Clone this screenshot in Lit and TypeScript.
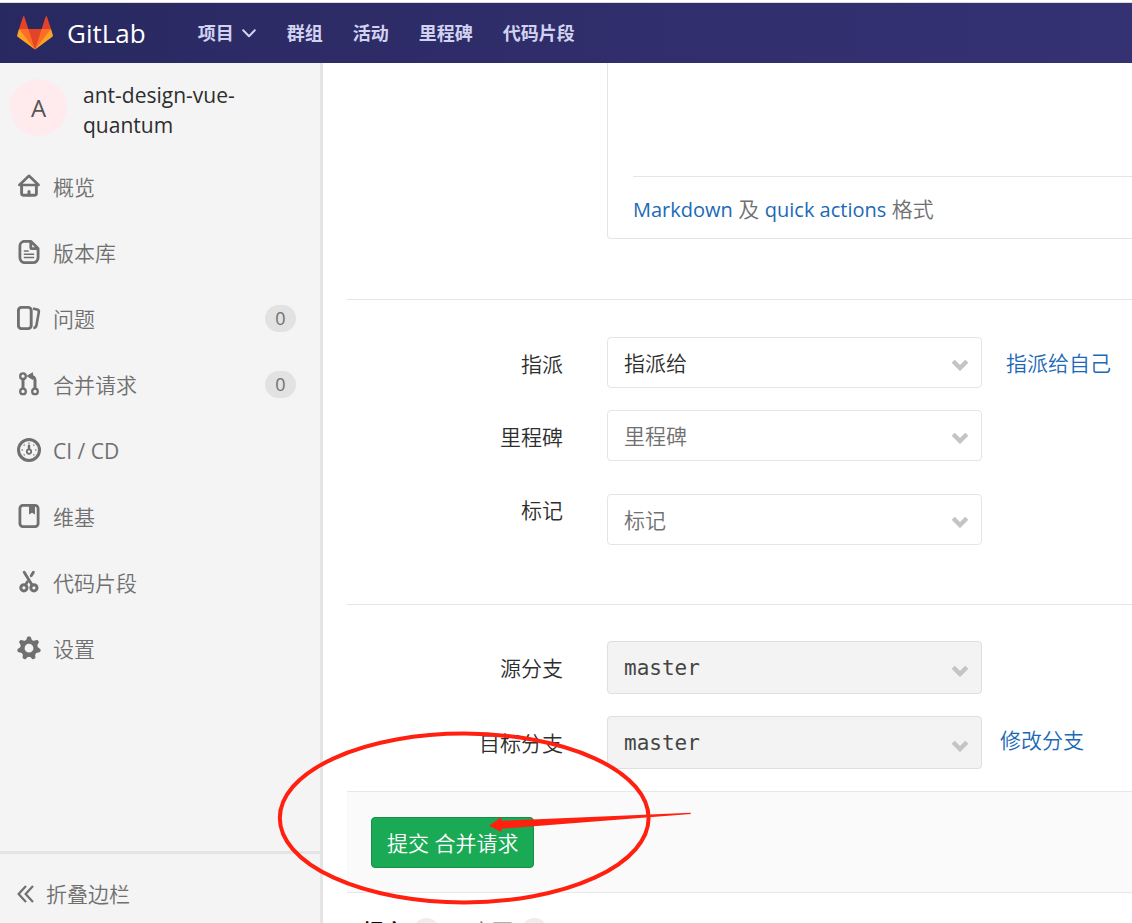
import { LitElement, html, css, svg, type TemplateResult } from "lit";
import { customElement, property } from "lit/decorators.js";

type NavItem = { icon: string; label: string; latin?: boolean; count?: number };

const NAV: NavItem[] = [
  { icon: "home", label: "概览" },
  { icon: "doc", label: "版本库" },
  { icon: "issues", label: "问题", count: 0 },
  { icon: "merge", label: "合并请求", count: 0 },
  { icon: "gauge", label: "CI / CD", latin: true },
  { icon: "book", label: "维基" },
  { icon: "scissors", label: "代码片段" },
  { icon: "gear", label: "设置" },
];

const TOP_LINKS = ["群组", "活动", "里程碑", "代码片段"];

const TEETH = [0, 1, 2, 3, 4, 5, 6].map((i) => (i * 360) / 7);
const TICKS = [45, 90, 135, 225, 270, 315, 0];

const ICONS: Record<string, TemplateResult> = {
  home: svg`
    <path d="M12 1.8 2.4 11H21.6Z" stroke-width="2.6" stroke-linejoin="round"/>
    <path d="M4.6 11V19.6a1.6 1.6 0 0 0 1.6 1.6H17.8a1.6 1.6 0 0 0 1.6-1.6V11" stroke-width="2.9"/>
    <path d="M12 17.4V21" stroke-width="3" stroke-linecap="round"/>`,
  doc: svg`
    <path d="M6.5 1.4H14L21.1 8.5V17.6a5 5 0 0 1-5 5H7.9a5 5 0 0 1-5-5V6a4.6 4.6 0 0 1 4.6-4.6Z" stroke-width="2.8" stroke-linejoin="round"/>
    <path d="M12.4 1.5V8a2 2 0 0 0 2 2H21V8L14.5 1.5Z" fill="currentColor" stroke="none"/>
    <path d="M15.2 4.6V7.2H17.8Z" fill="#f4f4f4" stroke="none"/>
    <path d="M7.4 11H11.2M7.4 14.2H16.6M7.4 17.4H16.6" stroke-width="1.5" stroke-linecap="round"/>`,
  issues: svg`
    <rect x="1.4" y="1.4" width="12.8" height="21.2" rx="3" stroke-width="2.9"/>
    <path d="M16 2.4 20 3.4a2.4 2.4 0 0 1 1.8 2.8L19.4 19.4a3.4 3.4 0 0 1-3 2.6" stroke-width="2.6"/>`,
  merge: svg`
    <circle cx="6" cy="4.2" r="2.8" stroke-width="2.3"/>
    <circle cx="6" cy="19.4" r="2.8" stroke-width="2.3"/>
    <circle cx="18" cy="19.4" r="2.8" stroke-width="2.3"/>
    <path d="M6 7V16.6M18 16.6V8.2a4 4 0 0 0-4-4" stroke-width="3"/>
    <path d="M10.2 4 15.6.8V7.4Z" fill="currentColor" stroke-width="1" stroke-linejoin="round"/>`,
  gauge: svg`
    <circle cx="12" cy="12" r="10.5" stroke-width="3"/>
    ${TICKS.map((a) => svg`<path d="M12 4.6V5.8" stroke-width="1.4" transform="rotate(${a} 12 12)"/>`)}
    <circle cx="12" cy="13.6" r="2.2" stroke-width="1.8"/>
    <path d="M12 7.6V11" stroke-width="2.4" stroke-linecap="round"/>`,
  book: svg`
    <rect x="2.9" y="1.4" width="18.2" height="21.2" rx="3" stroke-width="2.8"/>
    <path d="M12 2V10.4L15 8.8 18 10.4V2Z" fill="currentColor" stroke="none"/>`,
  scissors: svg`
    <circle cx="6.9" cy="17.8" r="3.1" stroke-width="3"/>
    <circle cx="16.9" cy="17.8" r="3.1" stroke-width="3"/>
    <path d="M7.2 2.2 15.4 15.6" stroke-width="2.8" stroke-linecap="round"/>
    <path d="M16.4 2.2 14.2 5.8M10.4 11.8 8.6 14.8" stroke-width="2.8" stroke-linecap="round"/>`,
  gear: svg`
    <circle cx="12" cy="12.2" r="6.6" stroke-width="4.4"/>
    ${TEETH.map((a) => svg`<path d="M11.2 1.4H12.8L14.2 5H9.8Z" fill="currentColor" stroke-width="2" stroke-linejoin="round" transform="rotate(${a} 12 12.2)"/>`)}`,
};

const FONT = css`
  :host {
    font-family: "Open Sans", "Noto Sans CJK SC", sans-serif;
    font-size: 21px;
    font-weight: 350;
    line-height: 30px;
  }
  * {
    box-sizing: border-box;
  }
  a {
    text-decoration: none;
  }
`;

@customElement("top-bar")
export class TopBar extends LitElement {
  static styles = [
    FONT,
    css`
      :host {
        display: block;
        border-top: 1px solid #dcdcdc;
        margin-top: 2px;
      }
      .bar {
        display: flex;
        align-items: center;
        height: 60px;
        padding-left: 17px;
        background: linear-gradient(90deg, #292961, #353274);
      }
      .brand {
        display: flex;
        align-items: center;
        gap: 14px;
        color: #fff;
        font-size: 26px;
        font-weight: 400;
      }
      .links {
        display: flex;
        gap: 30px;
        margin-left: 52px;
        font-size: 18px;
        font-weight: 700;
      }
      .links a {
        display: flex;
        align-items: center;
        gap: 8px;
        color: #d1d1f0;
      }
    `,
  ];

  render() {
    return html`
      <header class="bar">
        <a class="brand" href="#">
          <svg width="36" height="36" viewBox="0 0 36 36" aria-hidden="true">
            <path fill="#e24329" d="M2 14l9.38 9v-9l-4-12.28c-.205-.632-1.176-.632-1.38 0z" />
            <path fill="#e24329" d="M34 14l-9.38 9v-9l4-12.28c.205-.632 1.176-.632 1.38 0z" />
            <path fill="#e24329" d="M18 34.38 3 14H33Z" />
            <path fill="#fc6d26" d="M18 34.38 11.38 14H2L6 25Z" />
            <path fill="#fc6d26" d="M18 34.38 24.62 14H34L30 25Z" />
            <path fill="#fca326" d="M2 14L.1 20.16c-.18.565 0 1.2.5 1.56l17.42 12.66z" />
            <path fill="#fca326" d="M34 14l1.9 6.16c.18.565 0 1.2-.5 1.56L18 34.38z" />
          </svg>
          <span>GitLab</span>
        </a>
        <nav class="links">
          <a href="#">
            项目
            <svg width="15" height="9" viewBox="0 0 15 9" fill="none" stroke="currentColor" stroke-width="2" stroke-linecap="round" stroke-linejoin="round" aria-hidden="true">
              <path d="M1.2 1.2 7 7.2 12.8 1.2" />
            </svg>
          </a>
          ${TOP_LINKS.map((t) => html`<a href="#">${t}</a>`)}
        </nav>
      </header>
    `;
  }
}

@customElement("side-bar")
export class SideBar extends LitElement {
  static styles = [
    FONT,
    css`
      :host {
        display: flex;
        flex-direction: column;
        background: #f4f4f4;
        border-right: 3px solid #e4e4e4;
        color: #707070;
      }
      .project {
        display: flex;
        gap: 16px;
        padding: 16px 24px 13px 10px;
        color: #2e2e2e;
        font-weight: 500;
      }
      .title {
        padding-top: 1px;
      }
      .avatar {
        flex: none;
        display: grid;
        place-items: center;
        width: 57px;
        height: 57px;
        border-radius: 50%;
        background: #ffebee;
        color: #555;
        font-size: 24px;
        font-weight: 400;
      }
      .menu {
        flex: 1;
        margin: 0;
        padding: 0;
        list-style: none;
      }
      .item {
        display: flex;
        align-items: center;
        gap: 12px;
        height: 66px;
        padding: 0 24px 0 17px;
        color: inherit;
      }
      .icon {
        flex: none;
        fill: none;
        stroke: currentColor;
      }
      .label {
        flex: 1;
        padding-top: 2px;
      }
      .latin {
        font-weight: 400;
      }
      .count {
        width: 31px;
        border-radius: 14px;
        background: #e2e2e2;
        font-size: 18px;
        font-weight: 400;
        line-height: 27px;
        text-align: center;
      }
      .collapse {
        display: flex;
        align-items: center;
        gap: 12px;
        height: 72px;
        padding: 10px 17px 0;
        border: 0;
        border-top: 3px solid #e4e4e4;
        background: none;
        color: inherit;
        font: inherit;
      }
    `,
  ];

  render() {
    return html`
      <a class="project" href="#">
        <span class="avatar">A</span>
        <span class="title">ant-design-vue-quantum</span>
      </a>
      <ul class="menu">
        ${NAV.map(
          (n) => html`<li>
            <a class="item" href="#">
              <svg class="icon" width="24" height="24" viewBox="0 0 24 24" aria-hidden="true">${ICONS[n.icon]}</svg>
              <span class="label ${n.latin ? "latin" : ""}">${n.label}</span>
              ${n.count === undefined ? "" : html`<span class="count">${n.count}</span>`}
            </a>
          </li>`,
        )}
      </ul>
      <button class="collapse" type="button">
        <svg width="17" height="18" viewBox="0 0 17 18" fill="none" stroke="currentColor" stroke-width="2.2" aria-hidden="true">
          <path d="M9 1 1.6 9 9 17M16 1 8.6 9 16 17" />
        </svg>
        折叠边栏
      </button>
    `;
  }
}

@customElement("select-row")
export class SelectRow extends LitElement {
  @property() label = "";
  @property() value = "";
  @property() link = "";
  @property() kind = "";

  static styles = [
    FONT,
    css`
      :host {
        display: block;
      }
      .row {
        display: grid;
        grid-template-columns: 216px 375px auto;
        column-gap: 44px;
        align-items: start;
        color: #2e2e2e;
      }
      .name {
        padding-top: 12px;
        text-align: right;
      }
      .field {
        display: grid;
        align-items: center;
      }
      .field > * {
        grid-area: 1 / 1;
      }
      .lower {
        margin-top: 11px;
      }
      select {
        appearance: none;
        width: 100%;
        height: 51px;
        padding: 0 16px;
        border: 1px solid #e5e5e5;
        border-radius: 4px;
        background: #fff;
        color: #2e2e2e;
        font: inherit;
      }
      .muted select {
        color: #707070;
      }
      .branch select {
        height: 53px;
        border-color: #dfdfdf;
        background: #f3f3f3;
        color: #444;
        font-family: "DejaVu Sans Mono", monospace;
        opacity: 1;
      }
      .chevron {
        justify-self: end;
        margin: 4px 13px 0 0;
        pointer-events: none;
      }
      .branch .chevron {
        margin-top: 6px;
      }
      a {
        margin-left: -20px;
        padding-top: 11px;
        color: #1b69b6;
      }
      .near {
        margin-left: -26px;
        padding-top: 9px;
      }
    `,
  ];

  render() {
    return html`
      <div class="row">
        <label class="name" for="pick">${this.label}</label>
        <div class="field ${this.kind}">
          <select id="pick" ?disabled=${this.kind === "branch"}>
            <option>${this.value}</option>
          </select>
          <svg class="chevron" width="18" height="12" viewBox="0 0 18 12" fill="none" stroke="#c4c4c4" stroke-width="4.4" aria-hidden="true">
            <path d="M2.2 2.2 9 9 15.8 2.2" />
          </svg>
        </div>
        ${this.link ? html`<a class=${this.kind === "branch" ? "near" : ""} href="#">${this.link}</a>` : ""}
      </div>
    `;
  }
}

@customElement("app-root")
export class AppRoot extends LitElement {
  static styles = [
    FONT,
    css`
      :host {
        position: relative;
        display: flex;
        flex-direction: column;
        height: 100vh;
        overflow: hidden;
        background: #fff;
      }
      .body {
        flex: 1;
        display: grid;
        grid-template-columns: 323px minmax(0, 1fr);
        min-height: 0;
      }
      main {
        overflow: hidden;
        padding-left: 24px;
      }
      .editor {
        margin-left: 260px;
        padding-left: 25px;
        border: solid #e5e5e5;
        border-width: 0 0 1px 1px;
        border-bottom-left-radius: 4px;
      }
      textarea {
        display: block;
        width: 100%;
        height: 114px;
        padding: 0;
        border: 0;
        border-bottom: 1px solid #e5e5e5;
        background: none;
        font: inherit;
        resize: none;
      }
      .hint {
        margin: 0;
        padding: 17px 0 13px;
        color: #707070;
      }
      .hint a {
        color: #1b69b6;
        font-size: 20px;
        font-weight: 400;
      }
      .group {
        display: flex;
        flex-direction: column;
        gap: 22px;
        padding-top: 37px;
        border-top: 1px solid #e5e5e5;
      }
      .people {
        margin-top: 60px;
        padding-bottom: 59px;
      }
      .branches {
        padding-top: 36px;
        padding-bottom: 22px;
      }
      .actions {
        padding: 25px 24px 24px;
        border: solid #e8e8e8;
        border-width: 1px 0;
        background: #fafafa;
      }
      .submit {
        display: block;
        height: 51px;
        padding: 0 15px;
        border: 1px solid #168f48;
        border-radius: 4px;
        background: #1aaa55;
        color: #fff;
        font: inherit;
      }
      .tabs {
        display: flex;
        gap: 31px;
        padding: 23px 16px;
      }
      .tab {
        display: flex;
        align-items: center;
        gap: 8px;
        color: #707070;
        font-weight: 400;
      }
      .active {
        color: #000;
        font-weight: 700;
      }
      .pill {
        width: 27px;
        height: 27px;
        border-radius: 14px;
        background: #ededed;
      }
      .mark {
        position: absolute;
        left: 276px;
        top: 730px;
        pointer-events: none;
      }
    `,
  ];

  render() {
    return html`
      <top-bar></top-bar>
      <div class="body">
        <side-bar></side-bar>
        <main>
          <div class="editor">
            <textarea aria-label="描述"></textarea>
            <p class="hint"><a href="#">Markdown</a> 及 <a href="#">quick actions</a> 格式</p>
          </div>
          <section class="group people">
            <select-row label="指派" value="指派给" link="指派给自己"></select-row>
            <select-row label="里程碑" value="里程碑" kind="muted"></select-row>
            <select-row label="标记" value="标记" kind="muted lower"></select-row>
          </section>
          <section class="group branches">
            <select-row label="源分支" value="master" kind="branch"></select-row>
            <select-row label="目标分支" value="master" kind="branch" link="修改分支"></select-row>
          </section>
          <div class="actions"><button class="submit" type="button">提交 合并请求</button></div>
          <nav class="tabs">
            <a class="tab active" href="#">提交 <span class="pill"></span></a>
            <a class="tab" href="#">变更 <span class="pill"></span></a>
          </nav>
        </main>
      </div>
      <svg class="mark" width="420" height="178" viewBox="276 730 420 178" aria-hidden="true">
        <ellipse cx="464.2" cy="818" rx="184.4" ry="84.4" fill="none" stroke="#ff2010" stroke-width="4" />
        <path d="M489 825.7 501.4 817 501.6 820.7 690.7 812.8V814L501.6 828.7 501.4 832Z" fill="#ff2010" />
      </svg>
    `;
  }
}
